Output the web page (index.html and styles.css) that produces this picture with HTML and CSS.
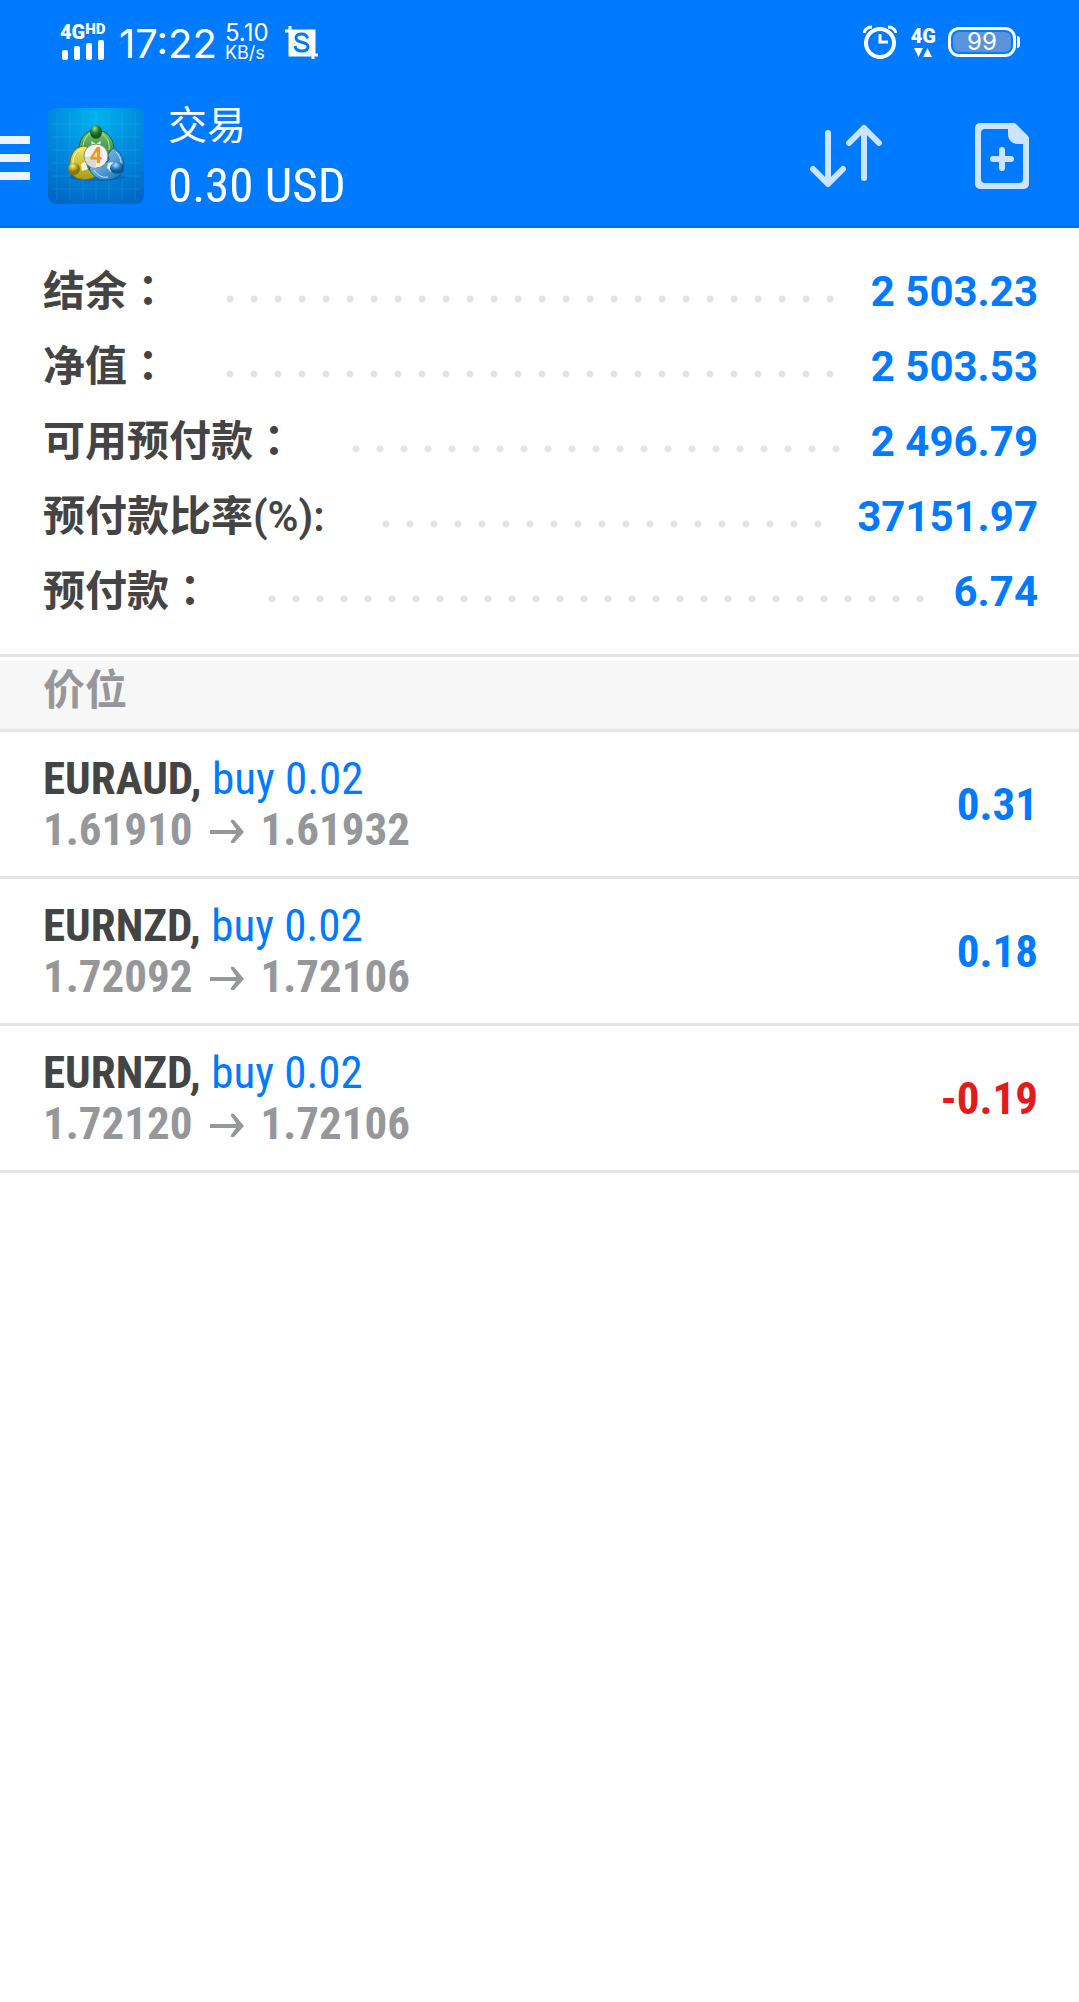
FILE: index.html
```html
<!DOCTYPE html>
<html lang="zh-CN">
<head>
<meta charset="UTF-8">
<meta name="viewport" content="width=device-width, initial-scale=1.0">
<title>交易</title>
<link rel="stylesheet" href="styles.css">
</head>
<body>
    <header class="header">
        <div class="status-bar">
            <div class="signal">
                <div class="network">4G<span class="hd">HD</span></div>
                <svg class="signal-bars" viewBox="0 0 42 20" fill="#fff">
                    <rect x="0" y="10" width="6" height="10" rx="2"/>
                    <rect x="12" y="6" width="6" height="14" rx="2"/>
                    <rect x="24" y="3" width="6" height="17" rx="2"/>
                    <rect x="36" y="0" width="6" height="20" rx="2"/>
                </svg>
            </div>
            <span class="clock">17:22</span>
            <div class="speed">
                <span class="speed-value">5.10</span>
                <span class="speed-unit">KB/s</span>
            </div>
            <svg class="crop-icon" viewBox="0 0 33 33">
                <path d="M0 5h29v24M5 0v29h28M28 24v9" fill="none" stroke="#fff" stroke-width="3"/>
                <path d="M4 4h25v25H4z" fill="#fff"/>
                <path d="M22.500 12.500c-.5-3-2.500-4.500-6-4.500-3.200 0-5.500 1.500-5.500 4 0 5.500 12 3 12 8.500 0 3-2.700 4.500-6.200 4.500-3.800 0-6.300-1.700-6.800-5" fill="none" stroke="#007aff" stroke-width="3"/>
            </svg>
            <div class="status-right">
                <svg class="alarm-icon" viewBox="0 0 34 34" fill="none" stroke="#fff">
                    <circle cx="17" cy="18" r="14" stroke-width="4"/>
                    <path d="M17 9v8h8" stroke-width="3"/>
                    <path d="M1 8C2 4 4 2 9 2M33 8c-1-4-3-6-8-6" stroke-width="3"/>
                </svg>
                <div class="data">
                    <span class="network">4G</span>
                    <svg class="data-arrows" viewBox="0 0 18 9" fill="#fff">
                        <path d="M0 0h9L4.500 9zM9 9h9L13.500 0z"/>
                    </svg>
                </div>
                <div class="battery"><span class="battery-level">99</span></div>
            </div>
        </div>
        <div class="toolbar">
            <button class="menu-btn" aria-label="Menu">
                <svg class="menu-icon" viewBox="0 0 30 44" fill="#ecf5ff">
                    <path d="M0 0h30v8H0zM0 18h30v8H0zM0 36h30v8H0z"/>
                </svg>
            </button>
            <svg class="logo" viewBox="0 0 96 96">
                <defs>
                    <radialGradient id="sky" cx=".5" cy=".1" r=".95">
                        <stop offset="0" stop-color="#00b4ee"/>
                        <stop offset=".5" stop-color="#008ade"/>
                        <stop offset="1" stop-color="#0068c4"/>
                    </radialGradient>
                    <linearGradient id="green" x2="0" y2="1">
                        <stop offset="0" stop-color="#7cc26f"/>
                        <stop offset="1" stop-color="#1c7a2e"/>
                    </linearGradient>
                    <linearGradient id="yellow" x2="0" y2="1">
                        <stop offset="0" stop-color="#f3ea62"/>
                        <stop offset="1" stop-color="#a89a12"/>
                    </linearGradient>
                    <linearGradient id="blue" x2="1" y2="1">
                        <stop offset="0" stop-color="#9ad4f6"/>
                        <stop offset="1" stop-color="#1670b8"/>
                    </linearGradient>
                    <radialGradient id="greenHead" cx=".4" cy=".25">
                        <stop offset="0" stop-color="#a5d893"/>
                        <stop offset=".6" stop-color="#2f8a38"/>
                        <stop offset="1" stop-color="#14601f"/>
                    </radialGradient>
                    <radialGradient id="yellowHead" cx=".4" cy=".25">
                        <stop offset="0" stop-color="#f7f094"/>
                        <stop offset=".6" stop-color="#b9aa1c"/>
                        <stop offset="1" stop-color="#857707"/>
                    </radialGradient>
                    <radialGradient id="blueHead" cx=".4" cy=".25">
                        <stop offset="0" stop-color="#b5e2fa"/>
                        <stop offset=".6" stop-color="#2a8bce"/>
                        <stop offset="1" stop-color="#0d5698"/>
                    </radialGradient>
                </defs>
                <rect width="96" height="96" rx="8" fill="url(#sky)"/>
                <path d="M9 4v88M22 4v88M35 4v88M48 4v88M61 4v88M74 4v88M87 4v88M4 16h88M4 29h88M4 42h88M4 55h88M4 68h88M4 81h88" stroke="#6cc8f5" stroke-opacity=".15"/>
                <ellipse cx="49" cy="69" rx="28" ry="4" fill="#004c94" fill-opacity=".35"/>
                <path d="M31 44c-1-12 6-22 17-22s19 9 18 23c0 5-3 8-6 10l-6-12H42l-6 2z" fill="url(#green)" stroke="#1a6b2a"/>
                <path d="M35 40c0-8 4-14 9-15M61 42c1-8-2-13-7-16" fill="none" stroke="#c4e8b0" stroke-width="1"/>
                <path d="M22 60c-1-12 4-21 14-22l8 3-6 8 2 12 9 7c-8 5-20 5-25-2z" fill="url(#yellow)" stroke="#7d7210"/>
                <path d="M25 55c0-8 4-13 10-14" fill="none" stroke="#fffbc0" stroke-width="1"/>
                <path d="M41 59l14-1 6-6-1-6 5-6c7 3 11 10 11 18 0 9-9 14-19 14-8 0-14-5-16-13z" fill="url(#blue)" stroke="#0f5c9c"/>
                <path d="M46 62c3 5 8 8 14 7M68 44c4 4 5 8 5 12" fill="none" stroke="#c5e8fc" stroke-width="1"/>
                <path d="M43 33l5 3 5-3-1 5h-8zM33 56l4-2 3 7-6 2zM60 55l5-1-2 10-4-4z" fill="#fff" fill-opacity=".85"/>
                <ellipse cx="48" cy="24" rx="6" ry="7" fill="url(#greenHead)"/>
                <circle cx="26" cy="61" r="6" fill="url(#yellowHead)"/>
                <ellipse cx="69" cy="60" rx="7" ry="6" fill="url(#blueHead)"/>
                <circle cx="48" cy="48" r="12" fill="#f2f2f2" stroke="#8b8b7a" stroke-width="1"/>
                <path d="M37 49a11 11 0 0 0 11 11V47z" fill="#d9d9dc"/>
                <text class="logo-number" x="48" y="55" text-anchor="middle">4</text>
            </svg>
            <div class="title">
                <span class="title-name">交易</span>
                <span class="title-profit">0.30 USD</span>
            </div>
            <div class="actions">
                <button class="icon-btn" aria-label="Sort">
                    <svg class="sort-icon" viewBox="0 0 74 64" fill="none" stroke="#cce4ff" stroke-width="6" stroke-linecap="round" stroke-linejoin="round">
                        <path d="M19 9v51M4 45l15 15 15-15M55 54V4M40 19L55 4l15 15"/>
                    </svg>
                </button>
                <button class="icon-btn" aria-label="New order">
                    <svg class="order-icon" viewBox="0 0 54 66">
                        <path d="M5 0h35l14 14v47a5 5 0 0 1-5 5H5a5 5 0 0 1-5-5V5a5 5 0 0 1 5-5zM10 6a4 4 0 0 0-4 4v46a4 4 0 0 0 4 4h34a4 4 0 0 0 4-4V21h-6a9 9 0 0 1-9-9V6z" fill="#cce4ff" fill-rule="evenodd"/>
                        <path d="M27 27v18M18 36h18" stroke="#cce4ff" stroke-width="6" stroke-linecap="round"/>
                    </svg>
                </button>
            </div>
        </div>
    </header>

    <main>
        <dl class="summary">
            <div class="summary-row">
                <dt>结余<span class="colon" lang="zh-TW">：</span></dt>
                <dd>2 503.23</dd>
            </div>
            <div class="summary-row">
                <dt>净值<span class="colon" lang="zh-TW">：</span></dt>
                <dd>2 503.53</dd>
            </div>
            <div class="summary-row">
                <dt>可用预付款<span class="colon" lang="zh-TW">：</span></dt>
                <dd>2 496.79</dd>
            </div>
            <div class="summary-row">
                <dt>预付款比率(%):</dt>
                <dd>37151.97</dd>
            </div>
            <div class="summary-row">
                <dt>预付款<span class="colon" lang="zh-TW">：</span></dt>
                <dd>6.74</dd>
            </div>
        </dl>

        <h2 class="section-title">价位</h2>
        <ul class="positions">
            <li class="position">
                <div>
                    <div class="symbol">EURAUD, <span class="side">buy 0.02</span></div>
                    <div class="prices">1.61910 <svg class="arrow" viewBox="0 0 34 26"><path d="M0 13h26v-1l-5-7q-1-3 3-2l10 12-10 11q-4 1-3-2l5-7H0z" fill="#95979b"/></svg> 1.61932</div>
                </div>
                <span class="profit">0.31</span>
            </li>
            <li class="position">
                <div>
                    <div class="symbol">EURNZD, <span class="side">buy 0.02</span></div>
                    <div class="prices">1.72092 <svg class="arrow" viewBox="0 0 34 26"><path d="M0 13h26v-1l-5-7q-1-3 3-2l10 12-10 11q-4 1-3-2l5-7H0z" fill="#95979b"/></svg> 1.72106</div>
                </div>
                <span class="profit">0.18</span>
            </li>
            <li class="position">
                <div>
                    <div class="symbol">EURNZD, <span class="side">buy 0.02</span></div>
                    <div class="prices">1.72120 <svg class="arrow" viewBox="0 0 34 26"><path d="M0 13h26v-1l-5-7q-1-3 3-2l10 12-10 11q-4 1-3-2l5-7H0z" fill="#95979b"/></svg> 1.72106</div>
                </div>
                <span class="profit loss">-0.19</span>
            </li>
        </ul>
    </main>
</body>
</html>
```
FILE: styles.css
```css
* {
    box-sizing: border-box;
}
body {
    margin: 0;
    background-color: #fff;
    color: #444;
    font-family: Roboto, "Noto Sans CJK SC", sans-serif;
}
svg {
    display: block;
    flex: none;
}
button {
    padding: 0;
    border: 0;
    background: none;
    cursor: pointer;
}

/* header */
.header {
    background-color: #007aff;
    border-bottom: 3px solid #006fe8;
    color: #fff;
}
.status-bar {
    display: flex;
    align-items: center;
    height: 87px;
    padding: 0 63px 3px 60px;
    font-family: Inter, sans-serif;
}
.signal {
    width: 48px;
}
.network {
    display: flex;
    font-family: Roboto, sans-serif;
    font-size: 20px;
    font-weight: 900;
    line-height: 16px;
}
.hd {
    font-size: 15px;
    line-height: 10px;
}
.signal-bars {
    width: 42px;
    height: 20px;
    margin: 0 0 0 2px;
}
.clock {
    margin-left: 11px;
    padding-top: 4px;
    font-size: 40px;
    line-height: 48px;
}
.speed {
    display: flex;
    flex-direction: column;
    margin-left: 8px;
    padding-top: 2px;
}
.speed-value {
    font-size: 24px;
    line-height: 20px;
}
.speed-unit {
    font-size: 18px;
    line-height: 20px;
}
.crop-icon {
    width: 33px;
    height: 33px;
    margin-left: 16px;
}
.status-right {
    display: flex;
    align-items: center;
    margin-left: auto;
}
.alarm-icon {
    width: 34px;
    height: 34px;
}
.data {
    display: flex;
    flex-direction: column;
    align-items: center;
    gap: 4px;
    margin: 0 12px 0 14px;
}
.data-arrows {
    width: 18px;
    height: 9px;
}
.battery {
    position: relative;
    width: 68px;
    height: 30px;
    padding: 2px;
    border: 3px solid #fff;
    border-radius: 11px;
}
.battery::after {
    content: "";
    position: absolute;
    top: 6px;
    right: -7px;
    width: 3px;
    height: 12px;
    border-radius: 0 3px 3px 0;
    background-color: #fff;
}
.battery-level {
    display: block;
    border-radius: 6px;
    background-color: #5a94d8;
    font-size: 24px;
    line-height: 20px;
    text-align: center;
}
.toolbar {
    display: flex;
    align-items: center;
    height: 138px;
    padding-right: 50px;
}
.menu-btn {
    padding-top: 4px;
}
.menu-icon {
    width: 30px;
    height: 44px;
}
.logo {
    width: 96px;
    height: 96px;
    margin: 0 24px 0 18px;
}
.logo-number {
    fill: #f7931e;
    font-size: 22px;
    font-weight: 700;
}
.title {
    display: flex;
    flex-direction: column;
}
.title-name {
    font-size: 39px;
    line-height: 60px;
}
.title-profit {
    font-family: "Roboto Condensed", "Liberation Sans Narrow", sans-serif;
    font-size: 49px;
    line-height: 60px;
}
.actions {
    display: flex;
    align-items: center;
    gap: 92px;
    margin-left: auto;
}
.sort-icon {
    width: 74px;
    height: 64px;
}
.order-icon {
    width: 54px;
    height: 66px;
}

/* account summary */
.summary {
    margin: 0;
    padding: 25px 41px 26px 43px;
    border-bottom: 3px solid #e4e4e4;
}
.summary-row {
    display: flex;
    align-items: center;
    height: 75px;
    padding-top: 3px;
    font-size: 42px;
    line-height: 60px;
}
.summary-row dt {
    font-weight: 600;
}
.colon {
    font-family: "Noto Sans CJK TC", sans-serif;
    line-height: 1;
}
.summary-row dd {
    order: 2;
    margin: 0;
    color: #007aff;
    font-weight: 700;
}
.summary-row::after {
    content: "";
    order: 1;
    flex: 1;
    height: 8px;
    margin: 14px 25px 0 49px;
    background: radial-gradient(circle, #e4e4e4 3px, transparent 4px) 0 0 / 24px 8px repeat-x;
}

/* open positions */
.section-title {
    margin: 3px 0 0;
    padding: 0 43px 8px;
    border-bottom: 3px solid #e4e4e4;
    background-color: #f7f7f7;
    color: #95979b;
    font-size: 42px;
    font-weight: 600;
    line-height: 61px;
}
.positions {
    margin: 0;
    padding: 0;
    list-style: none;
    font-family: "Roboto Condensed", "Liberation Sans Narrow", sans-serif;
    font-size: 45px;
    font-weight: 700;
    line-height: 51px;
}
.position {
    display: flex;
    justify-content: space-between;
    align-items: center;
    height: 147px;
    padding: 0 41px 0 43px;
    border-bottom: 3px solid #e4e4e4;
}
.side {
    color: #007aff;
    font-weight: 400;
}
.prices {
    display: flex;
    align-items: center;
    gap: 17px;
    color: #95979b;
}
.arrow {
    width: 34px;
    height: 26px;
}
.profit {
    color: #007aff;
}
.loss {
    color: #e41b1b;
}
```
